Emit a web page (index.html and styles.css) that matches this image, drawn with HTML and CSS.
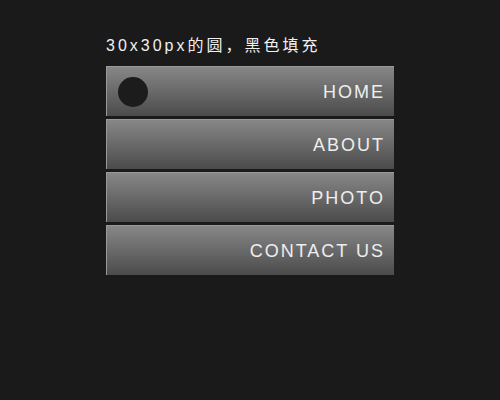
FILE: index.html
```html
<!DOCTYPE html>
<html lang="zh">
<head>
  <meta charset="UTF-8" />
  <title>Menu</title>
  <link rel="stylesheet" href="styles.css">
</head>
<body>
  <div class="wrap">
    <p class="note">30x30px的圆，黑色填充</p>
    <ul class="menu">
      <li><span class="dot"></span><a href="#">HOME</a></li>
      <li><a href="#">ABOUT</a></li>
      <li><a href="#">PHOTO</a></li>
      <li><a href="#">CONTACT US</a></li>
    </ul>
  </div>
</body>
</html>
```

FILE: styles.css
```css
* {
  margin: 0;
  padding: 0;
  box-sizing: border-box;
}

body {
  background: #1a1a1a;
  font-family: "Liberation Sans", Arial, "Noto Sans CJK SC", sans-serif;
  height: 100vh;
}

.wrap {
  width: 288px;
  margin-left: 106px;
  padding-top: 36px;
}

.note {
  color: #f0f0f0;
  font-size: 16px;
  letter-spacing: 3px;
  line-height: 20px;
  margin-bottom: 10px;
}

.menu {
  list-style: none;
  display: flex;
  flex-direction: column;
  gap: 3px;
}

.menu li {
  height: 50px;
  display: flex;
  align-items: center;
  padding: 1px 9px 0 11px;
  background: linear-gradient(#878787, #4b4b4b);
  border-top: 1px solid #9a9a9a;
  border-left: 1px solid #999;
}

.dot {
  width: 30px;
  height: 30px;
  border-radius: 50%;
  background: #1c1c1c;
}

.menu a {
  margin-left: auto;
  color: #eeeeee;
  text-decoration: none;
  font-size: 18px;
  letter-spacing: 2px;
}
```
